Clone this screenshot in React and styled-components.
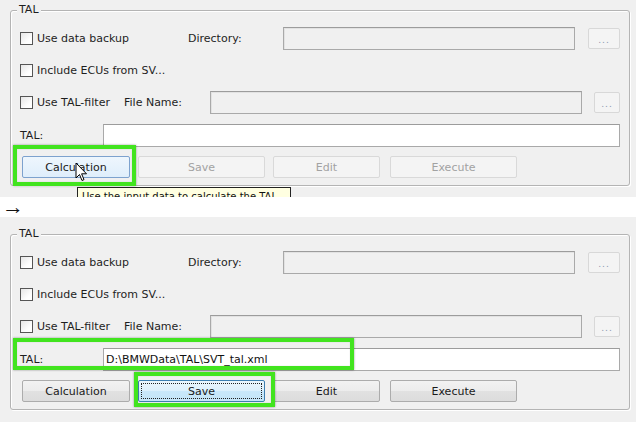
import React from "react"
import styled, { createGlobalStyle, css } from "styled-components"

const GlobalStyle = createGlobalStyle`
  html, body {
    margin: 0;
    padding: 0;
    background: #fff;
  }
  body {
    font-family: "DejaVu Sans", "Liberation Sans", sans-serif;
    font-size: 11px;
    color: #1e1e1e;
  }
`

const Page = styled.div`
  width: 640px;
  height: 422px;
  display: flex;
  flex-direction: column;
  overflow: hidden;
`

const Panel = styled.div`
  position: relative;
  width: 636px;
  height: ${({ height }) => height}px;
  background: #f0f0f0;
  padding-top: ${({ top }) => top}px;
  box-sizing: border-box;
  overflow: hidden;
`

const ArrowRow = styled.div`
  height: 20px;
  display: flex;
  align-items: center;
  padding-left: 2px;
  font-family: "Liberation Sans", "DejaVu Sans", sans-serif;
  font-size: 22px;
  line-height: 18px;
  color: #111;
`

const Group = styled.div`
  position: relative;
  margin-left: 10px;
  width: 620px;
  height: 176px;
  box-sizing: border-box;
  border: 1px solid #b4b4b4;
  border-radius: 3px;
  box-shadow: inset 1px 1px 0 #fff, 1px 1px 0 #fff;
  padding: 16px 9px 0 9px;
  display: flex;
  flex-direction: column;
  gap: 9px;
`

const Legend = styled.span`
  position: absolute;
  top: -8px;
  left: 6px;
  padding: 0 2px;
  background: #f0f0f0;
  line-height: 14px;
`

const Row = styled.div`
  display: flex;
  align-items: center;
  height: ${({ h }) => h || 23}px;
`

const Cell = styled.div`
  display: flex;
  align-items: center;
  width: ${({ w }) => w}px;
  flex: none;
  white-space: nowrap;
`

const Box = styled.span`
  width: 13px;
  height: 13px;
  box-sizing: border-box;
  border: 1px solid #555;
  background: linear-gradient(135deg, #e6e6e6, #fff 70%);
  margin-right: 4px;
  flex: none;
`

const Field = styled.div`
  height: 23px;
  box-sizing: border-box;
  width: ${({ w }) => (w ? `${w}px` : "auto")};
  flex: ${({ w }) => (w ? "none" : "1")};
  border: 1px solid #a9a9a9;
  border-top-color: #9c9c9c;
  background: ${({ white }) => (white ? "#fff" : "#f0f0f0")};
  box-shadow: ${({ white }) => (white ? "none" : "inset 1px 1px 0 #e2e2e2")};
  display: flex;
  align-items: center;
  padding-left: 2px;
  white-space: nowrap;
  color: #111;
`

const Dots = styled.div`
  width: ${({ w }) => w}px;
  height: 21px;
  margin-left: ${({ gap }) => gap}px;
  flex: none;
  box-sizing: border-box;
  border: 1px solid #d8d8d8;
  border-radius: 2px;
  background: #f4f4f4;
  display: flex;
  align-items: center;
  justify-content: center;
  font-size: 9px;
  letter-spacing: 1px;
  color: #8c98b0;
  padding-top: 2px;
`

const Buttons = styled.div`
  display: flex;
  align-items: center;
  height: 22px;
  padding-left: 2px;
`

const buttonLooks = {
  normal: css`
    border: 1px solid #acacac;
    background: linear-gradient(#f2f2f2, #ececec 50%, #e1e1e1 51%, #dcdcdc);
    color: #1a1a1a;
  `,
  hover: css`
    border: 1px solid #7da2ce;
    background: linear-gradient(#eef6fd, #dfeefb);
    color: #1a1a1a;
  `,
  disabled: css`
    border: 1px solid #d9d9d9;
    background: #f4f4f4;
    color: #a2a2a2;
  `,
  focus: css`
    border: 1px solid #3c7fb1;
    background: linear-gradient(#eaf6fd, #dcf0fc 50%, #c9e8fa 51%, #c4e5f7);
    color: #1a1a1a;
    &::after {
      content: "";
      position: absolute;
      inset: 2px;
      border: 1px dotted #222;
    }
  `,
}

const Button = styled.div`
  position: relative;
  width: ${({ w }) => w}px;
  height: 22px;
  margin-right: ${({ gap }) => gap || 0}px;
  box-sizing: border-box;
  border-radius: 2px;
  display: flex;
  align-items: center;
  justify-content: center;
  flex: none;
  ${({ look }) => buttonLooks[look || "normal"]}
`

const Highlight = styled.div`
  position: absolute;
  left: ${({ x }) => x}px;
  top: ${({ y }) => y}px;
  width: ${({ w }) => w}px;
  height: ${({ h }) => h}px;
  box-sizing: border-box;
  border: 4px solid #42e41f;
  box-shadow: 0 0 2px rgba(0, 0, 0, 0.4), inset 0 0 1px rgba(0, 0, 0, 0.3);
  pointer-events: none;
`

// the tooltip runs past the bottom of the panel, only its top shows
const Tooltip = styled.div`
  position: absolute;
  left: 77px;
  top: 187px;
  width: 214px;
  height: 24px;
  box-sizing: border-box;
  border: 1px solid #222;
  background: #ffffe1;
  padding: 3px 4px;
  white-space: nowrap;
  overflow: hidden;
  font-size: 10px;
  color: #111;
`

const Cursor = styled.svg`
  position: absolute;
  left: 75px;
  top: 162px;
`

const GroupBox = ({ talValue, buttons }) => (
  <Group>
    <Legend>TAL</Legend>
    <Row>
      <Cell w={168}>
        <Box />
        Use data backup
      </Cell>
      <Cell w={95}>Directory:</Cell>
      <Field w={292} />
      <Dots w={32} gap={13}>...</Dots>
    </Row>
    <Row>
      <Cell w={200}>
        <Box />
        Include ECUs from SV...
      </Cell>
    </Row>
    <Row>
      <Cell w={104}>
        <Box />
        Use TAL-filter
      </Cell>
      <Cell w={86}>File Name:</Cell>
      <Field w={372} />
      <Dots w={26} gap={12}>...</Dots>
    </Row>
    <Row h={24}>
      <Cell w={83}>TAL:</Cell>
      <Field white>{talValue}</Field>
    </Row>
    <Buttons>
      {buttons.map(b => (
        <Button key={b.label} w={b.w} gap={b.gap} look={b.look}>
          {b.label}
        </Button>
      ))}
    </Buttons>
  </Group>
)

const App = () => {
  return (
    <>
      <GlobalStyle />
      <Page>
        <Panel height={197} top={10}>
          <GroupBox
            talValue=""
            buttons={[
              { label: "Calculation", w: 108, gap: 8, look: "hover" },
              { label: "Save", w: 127, gap: 8, look: "disabled" },
              { label: "Edit", w: 107, gap: 10, look: "disabled" },
              { label: "Execute", w: 127, look: "disabled" },
            ]}
          />
          <Highlight x={13} y={145} w={123} h={41} />
          <Tooltip>Use the input data to calculate the TAL</Tooltip>
          <Cursor width="13" height="21" viewBox="0 0 13 21">
            <path
              d="M1 1 L1 16 L4.5 12.5 L7 18.5 L9 17.6 L6.6 11.8 L11.5 11.8 Z"
              fill="#fff"
              stroke="#000"
              strokeWidth="1"
              strokeLinejoin="round"
            />
          </Cursor>
        </Panel>
        <ArrowRow>→</ArrowRow>
        <Panel height={205} top={17}>
          <GroupBox
            talValue="D:\BMWData\TAL\SVT_tal.xml"
            buttons={[
              { label: "Calculation", w: 108, gap: 8 },
              { label: "Save", w: 127, gap: 8, look: "focus" },
              { label: "Edit", w: 107, gap: 10 },
              { label: "Execute", w: 127 },
            ]}
          />
          <Highlight x={13} y={121} w={341} h={32} />
          <Highlight x={134} y={155} w={141} h={35} />
        </Panel>
      </Page>
    </>
  )
}

export default App
